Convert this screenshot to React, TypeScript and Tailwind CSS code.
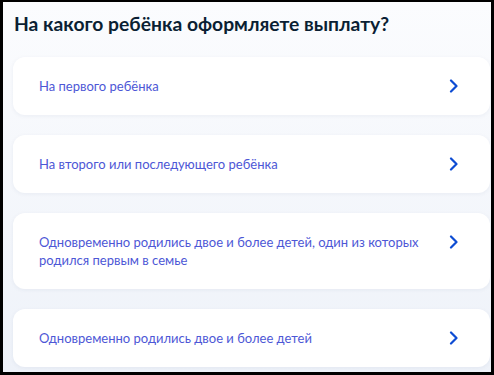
import React from "react";

const items = [
  "На первого ребёнка",
  "На второго или последующего ребёнка",
  "Одновременно родились двое и более детей, один из которых родился первым в семье",
  "Одновременно родились двое и более детей",
];

function Chevron() {
  return (
    <svg width="10" height="14" viewBox="0 0 10 14" fill="none">
      <path d="M2 1.5L7.5 7L2 12.5" stroke="#0d4cd3" strokeWidth="2.2" strokeLinecap="round" strokeLinejoin="round" />
    </svg>
  );
}

export default function App() {
  return (
    <div className="w-[494px] h-[375px] bg-black pt-[2px] pl-[3px] pr-[3px] pb-[3px] overflow-hidden" style={{ fontFamily: "Lato, 'Noto Sans', sans-serif" }}>
      <div className="w-full h-full bg-gradient-to-b from-[#fbfcfe] to-[#eef2f9] pl-[10px] pr-[1px] pt-[8px] flex flex-col">
        <h1 className="pl-[1px] text-[19.3px] leading-[28px] font-bold text-[#0b1f33]">На какого ребёнка оформляете выплату?</h1>
        <div className="mt-[19px] flex flex-col gap-[20px]">
          {items.map((t) => (
            <div key={t} className="bg-white rounded-[12px] shadow-[0_1px_4px_rgba(30,50,110,0.06)] pl-[26px] pr-[31px] py-[20px] flex items-start justify-between">
              <span className="text-[13px] leading-[18px] text-[#4d57d6] max-w-[390px]">{t}</span>
              <span className="h-[18px] flex items-center"><Chevron /></span>
            </div>
          ))}
        </div>
      </div>
    </div>
  );
}
